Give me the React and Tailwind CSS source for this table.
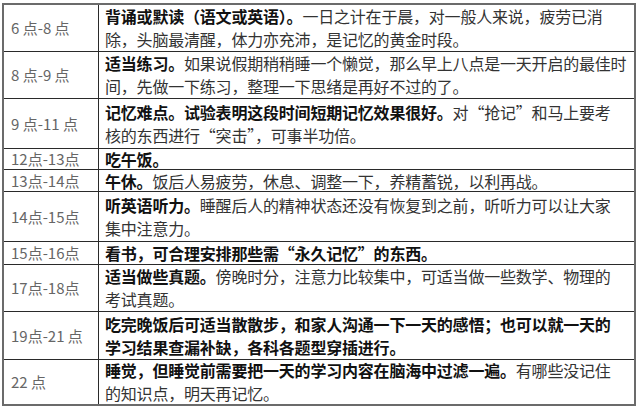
const rows = [
  { time: '6 点-8 点', h: 'h-[46px]', lines: [[['b', '背诵或默读（语文或英语）。'], ['n', '一日之计在于晨，对一般人来说，疲劳已消']], [['n', '除，头脑最清醒，体力亦充沛，是记忆的黄金时段。']]] },
  { time: '8 点-9 点', h: 'h-[47px]', lines: [[['b', '适当练习。'], ['n', '如果说假期稍稍睡一个懒觉，那么早上八点是一天开启的最佳时']], [['n', '间，先做一下练习，整理一下思绪是再好不过的了。']]] },
  { time: '9 点-11 点', h: 'h-[50px]', lines: [[['b', '记忆难点。试验表明这段时间短期记忆效果很好。'], ['n', '对“抢记”和马上要考']], [['n', '核的东西进行“突击”，可事半功倍。']]] },
  { time: '12点-13点', h: 'h-[21px]', lines: [[['b', '吃午饭。']]] },
  { time: '13点-14点', h: 'h-[22px]', lines: [[['b', '午休。'], ['n', '饭后人易疲劳，休息、调整一下，养精蓄锐，以利再战。']]] },
  { time: '14点-15点', h: 'h-[50px]', lines: [[['b', '听英语听力。'], ['n', '睡醒后人的精神状态还没有恢复到之前，听听力可以让大家']], [['n', '集中注意力。']]] },
  { time: '15点-16点', h: 'h-[23px]', lines: [[['b', '看书，可合理安排那些需“永久记忆”的东西。']]] },
  { time: '17点-18点', h: 'h-[47px]', lines: [[['b', '适当做些真题。'], ['n', '傍晚时分，注意力比较集中，可适当做一些数学、物理的']], [['n', '考试真题。']]] },
  { time: '19点-21 点', h: 'h-[48px]', lines: [[['b', '吃完晚饭后可适当散散步，和家人沟通一下一天的感悟；也可以就一天的']], [['b', '学习结果查漏补缺，各科各题型穿插进行。']]] },
  { time: '22 点', h: 'h-[45px]', lines: [[['b', '睡觉，但睡觉前需要把一天的学习内容在脑海中过滤一遍。'], ['n', '有哪些没记住']], [['n', '的知识点，明天再记忆。']]] },
];

export default function App() {
  return (
    <div className="w-[640px] h-[409px] bg-white pt-[3px] pl-[2px]" style={{ fontFamily: '"Noto Sans CJK SC", "SimSun", sans-serif' }}>
      <div className="w-[634px] border-2 border-[#6b6b6b] flex flex-col">
        {rows.map((r, i) => (
          <div key={i} className={`flex ${r.h} ${i > 0 ? 'border-t border-[#2a2a2a]' : ''}`}>
            <div className="w-[95px] shrink-0 border-r border-[#2a2a2a] pl-[7px] text-[15px] text-[#666] whitespace-nowrap flex items-center leading-[18px]">
              {r.time}
            </div>
            <div className={`flex-1 pl-[6px] flex flex-col justify-center text-[16px] tracking-[-0.2px] whitespace-nowrap ${r.lines.length > 1 ? 'leading-[23px]' : 'leading-[18px]'}`}>
              {r.lines.map((line, j) => (
                <div key={j}>
                  {line.map(([k, t], m) =>
                    k === 'b' ? (
                      <span key={m} className="font-bold text-[#111]">{t}</span>
                    ) : (
                      <span key={m} className="text-[#333]">{t}</span>
                    )
                  )}
                </div>
              ))}
            </div>
          </div>
        ))}
      </div>
    </div>
  );
}
